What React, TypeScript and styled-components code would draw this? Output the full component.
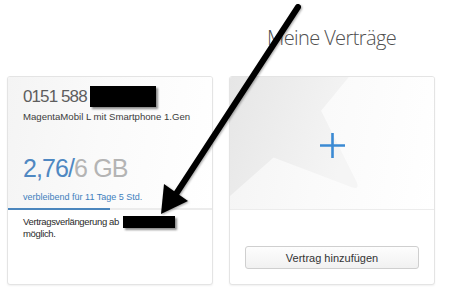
import React from 'react'
import styled, { createGlobalStyle } from 'styled-components'

const GlobalStyle = createGlobalStyle`
  html, body {
    margin: 0;
    padding: 0;
    background: #ffffff;
  }
  body {
    font-family: 'Liberation Sans', Arial, sans-serif;
  }
`

const Page = styled.div`
  position: relative;
  width: 450px;
  height: 294px;
  overflow: hidden;
  background: #ffffff;
`

const Header = styled.div`
  display: flex;
  padding: 24px 0 0 267px;
  height: 76px;
  box-sizing: border-box;
`

const Title = styled.h1`
  margin: 0;
  font-family: 'Open Sans', 'Liberation Sans', sans-serif;
  font-weight: 300;
  font-size: 20px;
  line-height: 28px;
  letter-spacing: -0.6px;
  color: #505050;
`

const CardRow = styled.div`
  display: flex;
  gap: 16px;
  padding-left: 7px;
`

const Card = styled.div`
  position: relative;
  display: flex;
  flex-direction: column;
  width: 206px;
  height: 209px;
  box-sizing: border-box;
  border: 1px solid #e4e4e4;
  border-radius: 3px;
  box-shadow: 0 1px 2px rgba(0, 0, 0, 0.06);
  overflow: hidden;
  background: #ffffff;
`

const CardTop = styled.div<{ tall?: boolean }>`
  position: relative;
  height: ${({ tall }) => (tall ? '133px' : '131px')};
  padding: 9px 15px 0 15px;
  box-sizing: border-box;
  background: linear-gradient(100deg, #f4f4f4 0%, #fafafa 45%, #ffffff 100%);
  border-bottom: ${({ tall }) => (tall ? '1px solid #ececec' : 'none')};
`

const Deco = styled.svg`
  position: absolute;
  left: 0;
  top: 0;
  width: 100%;
  height: 100%;
`

const TopContent = styled.div`
  position: relative;
  display: flex;
  flex-direction: column;
  white-space: nowrap;
`

const Number = styled.div`
  font-size: 17px;
  line-height: 22px;
  color: #5e5e5e;
  letter-spacing: -0.9px;
  display: flex;
  align-items: center;
`

const Redacted = styled.span<{ w: number; h: number }>`
  display: inline-block;
  width: ${({ w }) => w}px;
  height: ${({ h }) => h}px;
  background: #000000;
  box-shadow: 2px 2px 2px rgba(0, 0, 0, 0.45);
  vertical-align: middle;
`

const NumberRedacted = styled(Redacted)`
  margin-left: 3px;
  margin-top: -2px;
`

const Tariff = styled.div`
  margin-top: 2px;
  font-size: 9.6px;
  line-height: 13px;
  color: #3c3c3c;
`

const Volume = styled.div`
  margin-top: 30px;
  font-size: 25px;
  line-height: 30px;
  letter-spacing: -0.9px;
`

const Used = styled.span`
  color: #4f88c2;
`

const Total = styled.span`
  color: #b4b4b4;
`

const Remaining = styled.div`
  margin-top: 8px;
  font-size: 9px;
  line-height: 12px;
  color: #3f7fbd;
`

const Progress = styled.div`
  height: 2px;
  background: #ececec;
  display: flex;
`

const ProgressFill = styled.div`
  height: 100%;
  background: #4b86bd;
`

const CardBottom = styled.div`
  flex: 1;
  padding: 6px 15px 0 15px;
  font-size: 9.5px;
  line-height: 12px;
  letter-spacing: -0.35px;
  color: #2a2a2a;
`

const InlineRedacted = styled(Redacted)`
  margin-left: 4px;
  vertical-align: -3px;
`

const PlusArea = styled.div`
  position: relative;
  display: flex;
  justify-content: center;
  padding-top: 46px;
`

const AddArea = styled.div`
  flex: 1;
  display: flex;
  align-items: flex-start;
  justify-content: center;
  padding-top: 36px;
`

const AddButton = styled.button`
  width: 174px;
  height: 23px;
  border: 1px solid #cfcfcf;
  border-radius: 3px;
  background: linear-gradient(#fdfdfd, #f1f1f1);
  font-family: 'Liberation Sans', Arial, sans-serif;
  font-size: 11px;
  color: #333333;
  padding: 0;
`

const ArrowOverlay = styled.svg`
  position: absolute;
  left: 0;
  top: 0;
  width: 450px;
  height: 294px;
  pointer-events: none;
  filter: drop-shadow(1px 1px 1px rgba(0, 0, 0, 0.35));
`

const StarShape = ({ id, from, to }: { id: string; from: string; to: string }) => (
  <Deco viewBox="0 0 206 133" preserveAspectRatio="none">
    <defs>
      <linearGradient id={id} x1="0" y1="0" x2="1" y2="0.3">
        <stop offset="0" stopColor={from} />
        <stop offset="1" stopColor={to} />
      </linearGradient>
    </defs>
    <path
      d="M0 0 L120 0 L92 34 L128 106 Q131 114 123 111 L44 81 L0 120 Z"
      fill={`url(#${id})`}
    />
  </Deco>
)

export default function App() {
  const usedPercent = 50
  return (
    <>
      <GlobalStyle />
      <Page>
        <Header>
          <Title>Meine Verträge</Title>
        </Header>
        <CardRow>
          <Card>
            <CardTop>
              <TopContent>
                <Number>
                  0151 588
                  <NumberRedacted w={66} h={21} />
                </Number>
                <Tariff>MagentaMobil L mit Smartphone 1.Gen</Tariff>
                <Volume>
                  <Used>2,76/</Used>
                  <Total>6 GB</Total>
                </Volume>
                <Remaining>verbleibend für 11 Tage 5 Std.</Remaining>
              </TopContent>
            </CardTop>
            <Progress>
              <ProgressFill style={{ width: `${usedPercent}%` }} />
            </Progress>
            <CardBottom>
              Vertragsverlängerung ab
              <InlineRedacted w={52} h={12} />
              <br />
              möglich.
            </CardBottom>
          </Card>
          <Card>
            <CardTop tall>
              <StarShape id="star" from="#e6e6e6" to="#f5f5f5" />
              <PlusArea>
                <svg width="27" height="27" viewBox="0 0 27 27">
                  <path d="M13.5 1 V26 M1 13.5 H26" stroke="#3b8ad3" strokeWidth="2.6" fill="none" />
                </svg>
              </PlusArea>
            </CardTop>
            <AddArea>
              <AddButton>Vertrag hinzufügen</AddButton>
            </AddArea>
          </Card>
        </CardRow>
        <ArrowOverlay viewBox="0 0 450 294">
          <line x1="298" y1="7" x2="176" y2="194" stroke="#000" strokeWidth="6" strokeLinecap="round" />
          <polygon points="164,184 188,201 161,214" fill="#000" />
        </ArrowOverlay>
      </Page>
    </>
  )
}
